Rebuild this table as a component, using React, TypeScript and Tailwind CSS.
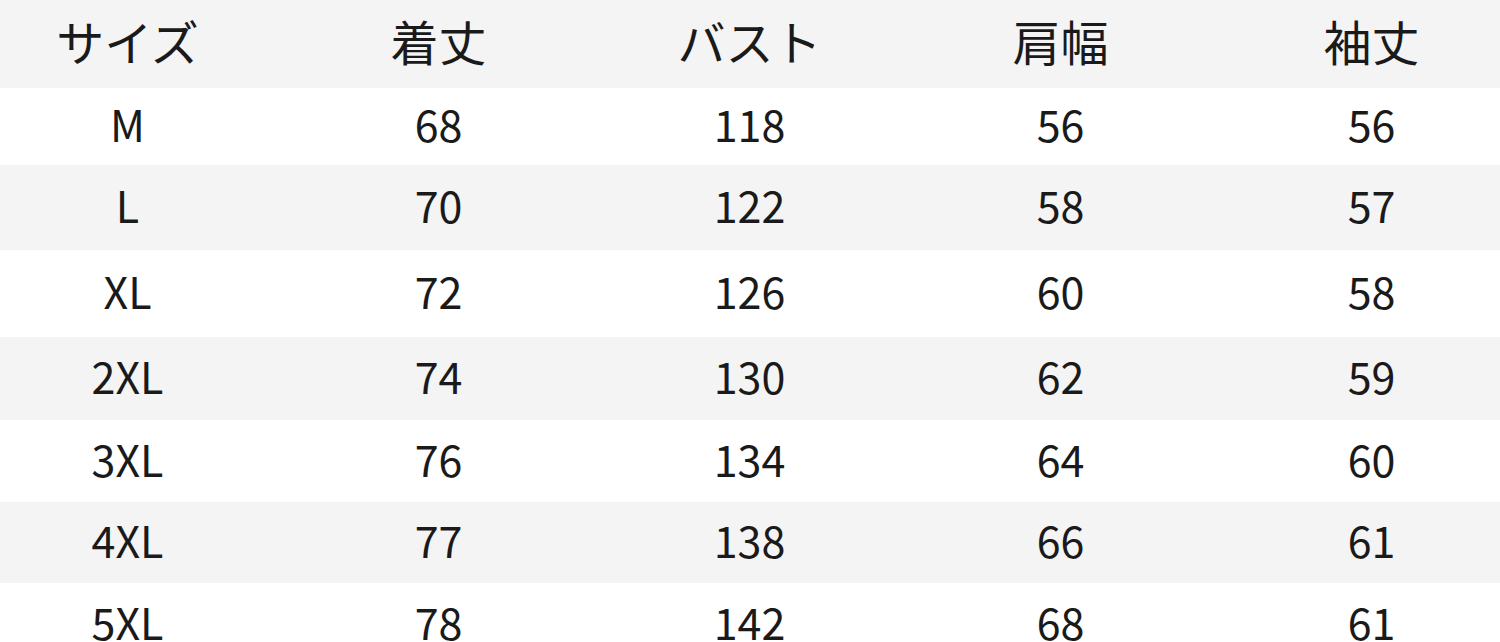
const headers = ["サイズ", "着丈", "バスト", "肩幅", "袖丈"];

const rows = [
  { cells: ["M", "68", "118", "56", "56"], h: "h-[77px]" },
  { cells: ["L", "70", "122", "58", "57"], h: "h-[85px]" },
  { cells: ["XL", "72", "126", "60", "58"], h: "h-[87px]" },
  { cells: ["2XL", "74", "130", "62", "59"], h: "h-[83px]" },
  { cells: ["3XL", "76", "134", "64", "60"], h: "h-[82px]" },
  { cells: ["4XL", "77", "138", "66", "61"], h: "h-[81px]" },
  { cells: ["5XL", "78", "142", "68", "61"], h: "h-[83px]" },
];

export default function App() {
  return (
    <div
      className="w-[1500px] h-[642px] overflow-hidden bg-white text-[#1a1a1a]"
      style={{ fontFamily: '"Noto Sans CJK JP", "Noto Sans", sans-serif' }}
    >
      {/* Header */}
      <div className="flex h-[88px] bg-[#f4f4f4] -ml-[28px]">
        {headers.map((t) => (
          <div key={t} className="w-[311px] shrink-0 flex items-center justify-center text-[48px] leading-none pb-[8px]">
            {t}
          </div>
        ))}
      </div>

      {/* Rows */}
      {rows.map((r, i) => (
        <div key={r.cells[0]} className={`flex -ml-[28px] ${r.h} ${i % 2 === 1 ? "bg-[#f4f4f4]" : "bg-white"}`}>
          {r.cells.map((c, j) => (
            <div key={j} className="w-[311px] shrink-0 flex items-center justify-center text-[43px] leading-none pb-[6px]">
              {c}
            </div>
          ))}
        </div>
      ))}
    </div>
  );
}
